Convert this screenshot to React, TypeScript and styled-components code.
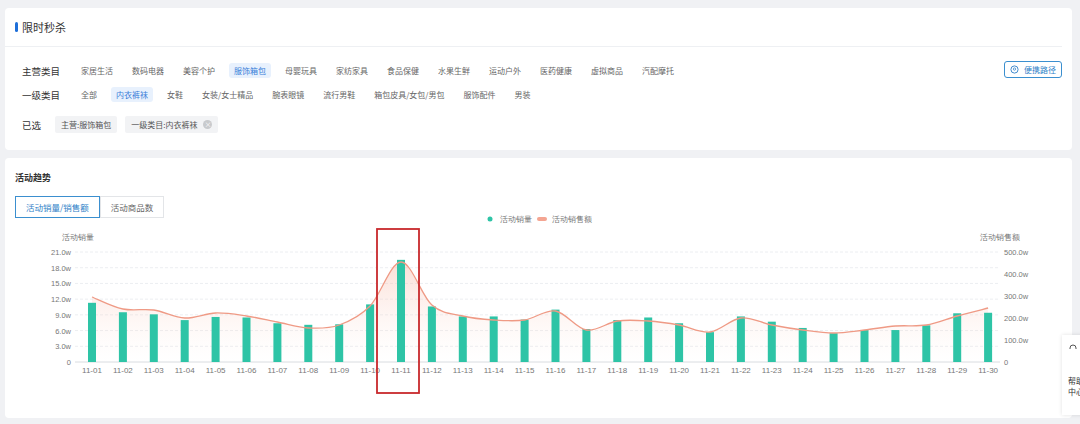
import React from "react";
import styled, { createGlobalStyle } from "styled-components";

const G = createGlobalStyle`
  body { margin:0; background:#f0f1f4; font-family:"Noto Sans CJK SC","Noto Sans",sans-serif; }
`;
const Page = styled.div`width:1080px;height:424px;overflow:hidden;position:relative;padding:8px 0 0 5px;box-sizing:border-box;display:flex;flex-direction:column;gap:8px;`;
const Card = styled.div<{ h: number }>`width:1067px;height:${p => p.h}px;background:#fff;border-radius:4px;box-sizing:border-box;position:relative;`;
const Title = styled.div`display:flex;align-items:center;gap:4px;height:38px;padding-left:10px;font-size:11px;color:#333;border-bottom:1px solid #eef0f3;margin:0 10px 0 0;
  &:before{content:"";width:3px;height:10px;background:#1e6fd9;border-radius:2px;}`;
const Rows = styled.div`padding:14px 0 0 17px;display:flex;flex-direction:column;gap:5px;`;
const Row = styled.div<{ mt?: number }>`display:flex;align-items:center;height:19px;margin-top:${p => p.mt || 0}px;`;
const Label = styled.div<{ w?: number }>`font-size:9.5px;color:#333;width:${p => p.w || 54}px;font-weight:normal;`;
const Item = styled.div<{ on?: boolean }>`font-size:8px;color:${p => (p.on ? "#3b7fd9" : "#666")};background:${p => (p.on ? "#e8f1fd" : "transparent")};padding:2px 5px;border-radius:3px;margin-right:9px;white-space:nowrap;`;
const Chip = styled.div`font-size:8px;color:#555;background:#f2f3f5;padding:3px 6px;border-radius:2px;margin-right:8px;display:flex;align-items:center;gap:6px;`;
const X = styled.span`width:9px;height:9px;border-radius:50%;background:#c8cacd;color:#fff;font-size:7px;line-height:9px;text-align:center;`;
const PathBtn = styled.div`position:absolute;right:10px;top:53px;width:58px;height:17px;border:1px solid #3b8fcf;border-radius:3px;box-sizing:border-box;display:flex;align-items:center;justify-content:center;gap:5px;font-size:8px;color:#2f7fc8;`;
const SubTitle = styled.div`font-size:9px;font-weight:bold;color:#333;padding:13px 0 0 10px;`;
const Tabs = styled.div`display:flex;margin:12px 0 0 10px;`;
const Tab = styled.div<{ on?: boolean }>`height:20px;padding:0 10px;font-size:8.5px;display:flex;align-items:center;border:1px solid ${p => (p.on ? "#3b8fcf" : "#e3e5e8")};color:${p => (p.on ? "#2f7fc8" : "#666")};`;
const Help = styled.div`position:absolute;left:1062px;top:335px;width:30px;height:80px;background:#fff;box-shadow:0 0 4px rgba(0,0,0,.12);font-size:8px;color:#333;padding:8px 0 0 6px;box-sizing:border-box;line-height:11px;`;

const bars = [11.3,9.5,9.1,8.0,8.6,8.5,7.4,7.1,7.2,11.0,19.5,10.6,8.7,8.7,8.1,10.0,6.3,8.0,8.5,7.4,5.7,8.7,7.7,6.5,5.5,6.1,6.1,7.0,9.3,9.4];
const lineY = [297,309,310,318,313,316,322,328,325,306,262,305,316,320,320,311,330,321,321,325,332,318,325,330,333,330,326,325,316,308];

function smooth(pts: number[][]) {
  let d = `M${pts[0][0]},${pts[0][1]}`;
  for (let i = 0; i < pts.length - 1; i++) {
    const p0 = pts[Math.max(0, i - 1)], p1 = pts[i], p2 = pts[i + 1], p3 = pts[Math.min(pts.length - 1, i + 2)];
    const c1 = [p1[0] + (p2[0] - p0[0]) / 6, p1[1] + (p2[1] - p0[1]) / 6];
    const c2 = [p2[0] - (p3[0] - p1[0]) / 6, p2[1] - (p3[1] - p1[1]) / 6];
    d += ` C${c1[0]},${c1[1]} ${c2[0]},${c2[1]} ${p2[0]},${p2[1]}`;
  }
  return d;
}

function Chart() {
  const ox = 5, oy = 158;
  const cx = (i: number) => 92 + i * 30.9 - ox;
  const Y0 = 362 - oy, H = 110;
  const pts = lineY.map((y, i) => [cx(i), y - oy]);
  const line = smooth(pts);
  const t = { fontSize: 7.5, fill: "#777", fontFamily: "Liberation Sans, sans-serif" } as const;
  return (
    <svg width="1067" height="260" style={{ position: "absolute", left: 0, top: 0 }}>
      <defs>
        <linearGradient id="lg" x1="0" y1="0" x2="0" y2="1">
          <stop offset="0" stopColor="#f6b8a6" stopOpacity=".45" />
          <stop offset="1" stopColor="#fde7e0" stopOpacity="0" />
        </linearGradient>
      </defs>
      {[0,1,2,3,4,5,6,7].map(k => {
        const y = Y0 - (k * H) / 7;
        return <g key={k}>
          <line x1={75 - ox} x2={1000 - ox} y1={y} y2={y} stroke={k ? "#eceef1" : "#d9dce0"} strokeDasharray={k ? "3 2" : undefined} />
          <text x={71 - ox} y={y + 3} textAnchor="end" {...t}>{k ? (k * 3).toFixed(1) + "w" : "0"}</text>
        </g>;
      })}
      {[0,1,2,3,4,5].map(k => (
        <text key={k} x={1004 - ox} y={Y0 - (k * H) / 5 + 3} {...t}>{k ? k * 100 + ".0w" : "0"}</text>
      ))}
      <text x={62 - ox} y={240 - oy} {...t}>活动销量</text>
      <text x={980 - ox} y={240 - oy} {...t}>活动销售额</text>
      <path d={`${line} L${cx(29)},${Y0} L${cx(0)},${Y0} Z`} fill="url(#lg)" />
      {bars.map((v, i) => (
        <rect key={i} x={cx(i) - 4} y={Y0 - (v / 21) * H} width="8" height={(v / 21) * H} fill="#2ec4a6" />
      ))}
      <path d={line} fill="none" stroke="#ef9a85" strokeWidth="1.3" />
      {bars.map((_, i) => (
        <text key={i} x={cx(i)} y={373 - oy} textAnchor="middle" {...t} fontSize="8">{`11-${String(i + 1).padStart(2, "0")}`}</text>
      ))}
      <circle cx={490 - ox} cy={219 - oy} r="2.5" fill="#2ec4a6" />
      <text x={500 - ox} y={222 - oy} {...t}>活动销量</text>
      <rect x={537 - ox} y={217 - oy} width="10" height="4" rx="2" fill="#f4a592" />
      <text x={552 - ox} y={222 - oy} {...t}>活动销售额</text>
      <rect x={377 - ox} y={229 - oy} width="42" height="164" fill="none" stroke="#c8282c" strokeWidth="1.8" />
    </svg>
  );
}

const main = ["家居生活","数码电器","美容个护","服饰箱包","母婴玩具","家纺家具","食品保健","水果生鲜","运动户外","医药健康","虚拟商品","汽配摩托"];
const sub = ["全部","内衣裤袜","女鞋","女装/女士精品","腕表眼镜","流行男鞋","箱包皮具/女包/男包","服饰配件","男装"];

export default function App() {
  return (
    <Page>
      <G />
      <Card h={142}>
        <Title>限时秒杀</Title>
        <Rows>
          <Row><Label>主营类目</Label>{main.map(m => <Item key={m} on={m === "服饰箱包"}>{m}</Item>)}</Row>
          <Row><Label>一级类目</Label>{sub.map(m => <Item key={m} on={m === "内衣裤袜"}>{m}</Item>)}</Row>
          <Row mt={6}><Label w={33}>已选</Label><Chip>主营:服饰箱包</Chip><Chip>一级类目:内衣裤袜<X>×</X></Chip></Row>
        </Rows>
        <PathBtn>
          <svg width="9" height="9" viewBox="0 0 10 10"><circle cx="5" cy="5" r="4" fill="none" stroke="#2f7fc8" /><circle cx="5" cy="4.5" r="1.3" fill="none" stroke="#2f7fc8" strokeWidth=".8" /></svg>
          便携路径
        </PathBtn>
      </Card>
      <Card h={260}>
        <Chart />
        <SubTitle>活动趋势</SubTitle>
        <Tabs><Tab on>活动销量/销售额</Tab><Tab>活动商品数</Tab></Tabs>
      </Card>
      <Help>
        <svg width="10" height="10" viewBox="0 0 10 10"><path d="M2 6V5a3 3 0 016 0v1" fill="none" stroke="#555" /></svg>
        <div style={{ marginTop: 20 }}>帮助<br />中心</div>
      </Help>
    </Page>
  );
}
